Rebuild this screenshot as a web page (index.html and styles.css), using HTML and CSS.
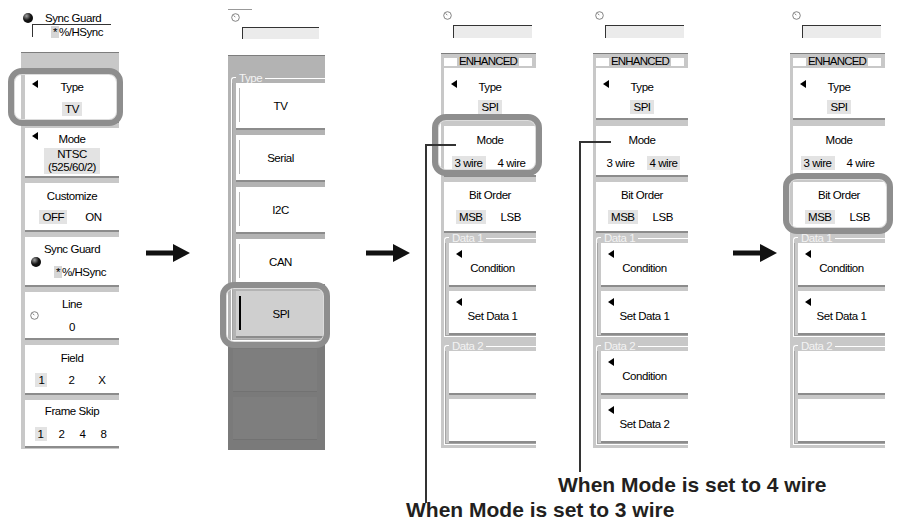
FILE: index.html
```html
<!DOCTYPE html>
<html lang="en">
<head>
  <meta charset="UTF-8" />
  <meta name="viewport" content="width=device-width, initial-scale=1.0"/>
  <title>Trigger Type: SPI</title>
  <link rel="stylesheet" href="styles.css">
</head>
<body>

  <div class="stage">

    <!-- 1: TV trigger menu -->
    <div class="panel p1">
      <div class="head">
        <div class="head-row"><span class="knob"></span><span class="head-label">Sync Guard</span></div>
        <div class="readout"><span class="hl">*</span>%/HSync</div>
      </div>
      <div class="body">
        <div class="item t-type ring ring-a">
          <span class="tri float"></span>
          <div class="title">Type</div>
          <div class="vals"><span class="v on">TV</span></div>
        </div>
        <div class="item t-mode">
          <span class="tri float"></span>
          <div class="title">Mode</div>
          <div class="vals"><span class="v on two">NTSC<br>(525/60/2)</span></div>
        </div>
        <div class="item t-cust">
          <div class="title">Customize</div>
          <div class="vals g-onoff"><span class="v on">OFF</span><span class="v">ON</span></div>
        </div>
        <div class="item t-sync">
          <div class="title">Sync Guard</div>
          <span class="knob"></span>
          <div class="dial-val"><span class="hl">*</span>%/HSync</div>
        </div>
        <div class="item t-line">
          <div class="title">Line</div>
          <svg class="dial" viewBox="0 0 9 9"><circle cx="4.5" cy="4.5" r="3.8" fill="#fff" stroke="#666" stroke-width="0.8"/><path d="M2.6 2.4 4.3 4.2" stroke="#666" stroke-width="0.8"/></svg>
          <div class="zero">0</div>
        </div>
        <div class="item t-field">
          <div class="title">Field</div>
          <div class="vals g-field"><span class="v on">1</span><span class="v">2</span><span class="v">X</span></div>
        </div>
        <div class="item t-skip">
          <div class="title">Frame Skip</div>
          <div class="vals g-skip"><span class="v on">1</span><span class="v">2</span><span class="v">4</span><span class="v">8</span></div>
        </div>
      </div>
    </div>

    <svg class="arrow a1" viewBox="0 0 44 18"><path d="M0 6.5H27V0L44 9 27 18V11.5H0Z" fill="#111"/></svg>

    <!-- 2: type list -->
    <div class="panel p2">
      <div class="head">
        <div class="hline"></div>
        <svg class="dial" viewBox="0 0 9 9"><circle cx="4.5" cy="4.5" r="3.8" fill="#fff" stroke="#666" stroke-width="0.8"/><path d="M2.6 2.4 4.3 4.2" stroke="#666" stroke-width="0.8"/></svg>
        <div class="readout"></div>
      </div>
      <div class="body">
        <div class="legend">Type</div>
        <div class="group">
          <div class="item opt"><span class="mark"></span><span class="lbl">TV</span></div>
          <div class="item opt"><span class="mark"></span><span class="lbl">Serial</span></div>
          <div class="item opt"><span class="mark"></span><span class="lbl">I2C</span></div>
          <div class="item opt"><span class="mark"></span><span class="lbl">CAN</span></div>
          <div class="item opt sel ring ring-b"><span class="mark"></span><span class="lbl">SPI</span></div>
        </div>
      </div>
      <div class="shade">
        <div class="ghost"></div>
        <div class="ghost"></div>
      </div>
    </div>

    <svg class="arrow a2" viewBox="0 0 44 18"><path d="M0 6.5H27V0L44 9 27 18V11.5H0Z" fill="#111"/></svg>

    <!-- 3: SPI, 3 wire -->
    <div class="panel p3">
      <div class="head">
        <svg class="dial" viewBox="0 0 9 9"><circle cx="4.5" cy="4.5" r="3.8" fill="#fff" stroke="#666" stroke-width="0.8"/><path d="M2.6 2.4 4.3 4.2" stroke="#666" stroke-width="0.8"/></svg>
        <div class="readout"></div>
      </div>
      <div class="body">
        <div class="enh">ENHANCED</div>
        <div class="item s-type">
          <span class="tri float"></span>
          <div class="title">Type</div>
          <div class="vals"><span class="v on">SPI</span></div>
        </div>
        <div class="item s-mode ring ring-c">
          <div class="title">Mode</div>
          <div class="vals g-wire"><span class="v on">3 wire</span><span class="v">4 wire</span></div>
        </div>
        <div class="item s-bit">
          <div class="title">Bit Order</div>
          <div class="vals g-bit"><span class="v on">MSB</span><span class="v">LSB</span></div>
        </div>
        <div class="legend">Data 1</div>
        <div class="group">
          <div class="item sub"><span class="tri"></span><div class="title">Condition</div></div>
          <div class="item sub"><span class="tri"></span><div class="title">Set Data 1</div></div>
        </div>
        <div class="legend next">Data 2</div>
        <div class="group">
          <div class="item sub"></div>
          <div class="item sub"></div>
        </div>
      </div>
    </div>

    <!-- 4: SPI, 4 wire -->
    <div class="panel p4">
      <div class="head">
        <svg class="dial" viewBox="0 0 9 9"><circle cx="4.5" cy="4.5" r="3.8" fill="#fff" stroke="#666" stroke-width="0.8"/><path d="M2.6 2.4 4.3 4.2" stroke="#666" stroke-width="0.8"/></svg>
        <div class="readout"></div>
      </div>
      <div class="body">
        <div class="enh">ENHANCED</div>
        <div class="item s-type">
          <span class="tri float"></span>
          <div class="title">Type</div>
          <div class="vals"><span class="v on">SPI</span></div>
        </div>
        <div class="item s-mode">
          <div class="title">Mode</div>
          <div class="vals g-wire"><span class="v">3 wire</span><span class="v on">4 wire</span></div>
        </div>
        <div class="item s-bit">
          <div class="title">Bit Order</div>
          <div class="vals g-bit"><span class="v on">MSB</span><span class="v">LSB</span></div>
        </div>
        <div class="legend">Data 1</div>
        <div class="group">
          <div class="item sub"><span class="tri"></span><div class="title">Condition</div></div>
          <div class="item sub"><span class="tri"></span><div class="title">Set Data 1</div></div>
        </div>
        <div class="legend next">Data 2</div>
        <div class="group">
          <div class="item sub"><span class="tri"></span><div class="title">Condition</div></div>
          <div class="item sub"><span class="tri"></span><div class="title">Set Data 2</div></div>
        </div>
      </div>
    </div>

    <svg class="arrow a3" viewBox="0 0 44 18"><path d="M0 6.5H27V0L44 9 27 18V11.5H0Z" fill="#111"/></svg>

    <!-- 5: bit order -->
    <div class="panel p5">
      <div class="head">
        <svg class="dial" viewBox="0 0 9 9"><circle cx="4.5" cy="4.5" r="3.8" fill="#fff" stroke="#666" stroke-width="0.8"/><path d="M2.6 2.4 4.3 4.2" stroke="#666" stroke-width="0.8"/></svg>
        <div class="readout"></div>
      </div>
      <div class="body">
        <div class="enh">ENHANCED</div>
        <div class="item s-type">
          <span class="tri float"></span>
          <div class="title">Type</div>
          <div class="vals"><span class="v on">SPI</span></div>
        </div>
        <div class="item s-mode">
          <div class="title">Mode</div>
          <div class="vals g-wire"><span class="v on">3 wire</span><span class="v">4 wire</span></div>
        </div>
        <div class="item s-bit ring ring-d">
          <div class="title">Bit Order</div>
          <div class="vals g-bit"><span class="v on">MSB</span><span class="v">LSB</span></div>
        </div>
        <div class="legend">Data 1</div>
        <div class="group">
          <div class="item sub"><span class="tri"></span><div class="title">Condition</div></div>
          <div class="item sub"><span class="tri"></span><div class="title">Set Data 1</div></div>
        </div>
        <div class="legend next">Data 2</div>
        <div class="group">
          <div class="item sub"></div>
          <div class="item sub"></div>
        </div>
      </div>
    </div>

  </div>

  <div class="notes">
    <div class="note note-4">When Mode is set to 4 wire</div>
    <div class="note note-3">When Mode is set to 3 wire</div>
  </div>

  <!-- leader lines from the Mode keys down to the notes -->
  <div class="lead lead-3h"></div>
  <div class="lead lead-3v"></div>
  <div class="lead lead-4h"></div>
  <div class="lead lead-4v"></div>

</body>
</html>
```

FILE: styles.css
```css
body {
  margin: 0;
  width: 898px;
  height: 522px;
  overflow: hidden;
  position: relative;
  background: #fff;
  color: #000;
  font-family: "Liberation Sans", Arial, sans-serif;
}

.stage {
  display: flex;
  align-items: flex-start;
  height: 452px;
  padding-left: 21px;
}

.arrow {
  flex: none;
  width: 44px;
  height: 18px;
  margin-top: 244px;
}
.a1 { margin-left: 27px; margin-right: 38px; }
.a2 { margin-left: 41px; margin-right: 31px; }
.a3 { margin-left: 45px; margin-right: 13px; }

.panel {
  flex: none;
  width: 95px;
  font-size: 11.5px;
  line-height: 14px;
  letter-spacing: -0.45px;
}
.p1 { width: 98px; }
.p2 { width: 97px; }
.p4 { margin-left: 57px; }

/* top readout area */
.head {
  height: 53px;
  box-sizing: border-box;
  padding-top: 11px;
}
.p1 .head { height: 52px; }
.p2 .head { height: 55px; padding-top: 9px; }

.head-row {
  display: flex;
  align-items: center;
  height: 13px;
}
.head-row .knob { margin-left: 2px; }
.head-label { margin-left: 12px; }

.readout {
  width: 78px;
  height: 12px;
  margin: 5px 0 0 12px;
  border-top: 1px solid #333;
  border-left: 1px solid #333;
  background: #ebebeb;
}
.p1 .readout {
  height: 13px;
  margin: 0 0 0 11px;
  padding-left: 10px;
  box-sizing: border-box;
  width: 79px;
  background: #fff;
  text-align: center;
  line-height: 14px;
}
.p2 .readout { width: 76px; height: 11px; margin-left: 14px; }

.hline {
  width: 24px;
  height: 1px;
  background: #999;
}
.p2 .head .dial { margin: 3px 0 0 3px; }

.dial {
  display: block;
  width: 9px;
  height: 9px;
  margin-left: 2px;
}

.knob {
  display: block;
  flex: none;
  width: 10px;
  height: 10px;
  border-radius: 50%;
  background: radial-gradient(circle at 35% 30%, #a0a0a0 0, #151515 45%, #000 100%);
}

.hl {
  background: #d6d6d6;
  padding: 0 2px;
}

/* grey menu body */
.body {
  background: #c8c8c8;
  border-top: 1px solid #7d7d7d;
  padding: 2px 0 3px 3px;
}
.p1 .body { padding: 22px 0 1px 4px; }
.p2 .body { background: #b3b3b3; padding: 17px 0 2px 3px; }

.item {
  position: relative;
  box-sizing: border-box;
  background: #fff;
  border-bottom: 2px solid #8c8c8c;
  margin-bottom: 5px;
  text-align: center;
}
.item:last-child { margin-bottom: 0; }

.tri {
  display: block;
  width: 0;
  height: 0;
  margin-left: 7px;
  border-style: solid;
  border-width: 4px 6px 4px 0;
  border-color: transparent #000 transparent transparent;
}
.tri.float {
  margin-top: 0;
  margin-bottom: -8px;
}

.vals {
  display: flex;
  justify-content: center;
  gap: 12px;
}
.v { padding: 0 3px; }
.v.on { background: #e3e3e3; }
.v.two { line-height: 13px; padding: 0 4px; }

.g-onoff { gap: 15px; }
.g-field { gap: 18px; }
.g-skip { gap: 9px; }
.g-wire { gap: 9px; }
.g-bit { gap: 12px; }

/* panel 1 keys */
.t-type { height: 48px; padding-top: 5px; }
.t-type .vals { margin-top: 8px; }
.t-mode { height: 50px; padding-top: 4px; }
.t-mode .vals { margin-top: 2px; }
.t-cust { height: 49px; padding-top: 6px; }
.t-cust .vals { margin-top: 7px; }
.t-sync { height: 50px; padding-top: 5px; }
.t-sync .knob { margin: 1px 0 -2px 6px; }
.dial-val { padding-left: 16px; }
.t-line { height: 48px; padding-top: 5px; }
.t-line .dial { margin-left: 5px; }
.t-field { height: 50px; padding-top: 6px; }
.t-field .vals { margin-top: 8px; }
.t-skip { height: 48px; padding-top: 4px; }
.t-skip .vals { margin-top: 9px; }

/* SPI panels */
.enh {
  display: flex;
  align-items: center;
  gap: 2px;
  height: 11px;
  line-height: 11px;
  margin: 0 4px 1px 0;
  letter-spacing: -0.8px;
}
.enh::before,
.enh::after {
  content: "";
  flex: 1;
  height: 8px;
  background: #fff;
}

.s-type { height: 52px; padding-top: 12px; margin-bottom: 6px; }
.s-type .vals { margin-top: 6px; }
.s-mode { height: 51px; padding-top: 7px; }
.s-mode .vals { margin-top: 9px; }
.s-bit { height: 51px; padding-top: 6px; margin-bottom: 0; }
.s-bit .vals { margin-top: 8px; }

.legend {
  display: flex;
  align-items: center;
  height: 10px;
  line-height: 10px;
  color: #f3f3f3;
}
.legend::before {
  content: "";
  align-self: flex-end;
  width: 4px;
  height: 5px;
  margin-right: 3px;
  border-top: 1px solid #fff;
  border-left: 1px solid #fff;
  border-top-left-radius: 3px;
}
.legend::after {
  content: "";
  flex: 1;
  margin-left: 3px;
  border-top: 1px solid #fff;
}
.legend.next { margin-top: 4px; }

.group {
  border-left: 1px solid #fff;
  border-bottom: 1px solid #fff;
  box-shadow: inset 1px -1px 0 #a4a4a4;
  padding: 0 0 1px 4px;
}
.group .item { margin-bottom: 4px; }
.group .item:last-child { margin-bottom: 0; }

.sub { height: 44px; padding-top: 7px; }
.sub .title { margin-top: 3px; }

/* type list */
.p2 .group { padding-bottom: 2px; }
.opt {
  display: flex;
  height: 47px;
  margin-bottom: 5px !important;
}
.opt:last-child { margin-bottom: 0 !important; }
.mark {
  width: 1px;
  margin: 5px 0 6px 3px;
  background: #b5b5b5;
}
.lbl {
  flex: 1;
  align-self: center;
  margin-left: -4px;
}
.opt.sel { background: #cfcfcf; }
.opt.sel .mark { width: 2px; background: #000; }

.shade {
  height: 107px;
  background: #7a7a7a;
  padding: 6px 0 0 5px;
  box-sizing: border-box;
}
.ghost {
  height: 42px;
  margin: 0 8px 5px 0;
  background: #7e7e7e;
  border-bottom: 1px solid #727272;
}

/* highlight rings */
.ring::after {
  content: "";
  position: absolute;
  z-index: 3;
  border: 6px solid #8e8e8e;
  border-radius: 14px;
  box-shadow: inset 0 0 0 1px #dcdcdc;
  pointer-events: none;
}
.ring-a::after { top: -7px; right: -4px; bottom: -5px; left: -17px; }
.ring-b::after { top: -9px; right: -5px; bottom: -12px; left: -16px; }
.ring-c::after { top: -12px; right: -6px; bottom: -1px; left: -12px; }
.ring-d::after { top: -9px; right: -8px; bottom: -3px; left: -10px; }

/* notes */
.notes {
  margin-top: 20px;
  font-size: 21px;
  font-weight: bold;
  line-height: 25px;
  color: #231f20;
}
.note-4 { padding-left: 558px; }
.note-3 { padding-left: 406px; }

.lead {
  position: absolute;
  z-index: 4;
  background: #333;
}
.lead-3h { left: 425px; top: 144px; width: 31px; height: 2px; }
.lead-3v { left: 425px; top: 144px; width: 2px; height: 359px; }
.lead-4h { left: 579px; top: 141px; width: 32px; height: 2px; }
.lead-4v { left: 579px; top: 141px; width: 2px; height: 331px; }
```
